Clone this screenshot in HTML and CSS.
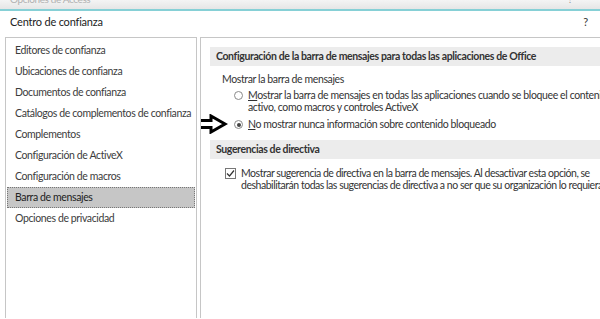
FILE: index.html
```html
<!DOCTYPE html>
<html lang="es">
<head>
    <meta charset="UTF-8">
    <title>Centro de confianza</title>
    <link rel="stylesheet" href="styles.css">
</head>
<body>
    <div class="backdrop">
        <span class="backdrop-title">Opciones de Access</span>
        <span class="backdrop-help">?</span>
    </div>
    <div class="dialog">
        <div class="dialog-header">
            <span>Centro de confianza</span>
            <span class="help">?</span>
        </div>
        <div class="dialog-body">
            <!-- Navegación -->
            <ul class="nav">
                <li>Editores de confianza</li>
                <li>Ubicaciones de confianza</li>
                <li>Documentos de confianza</li>
                <li>Catálogos de complementos de confianza</li>
                <li>Complementos</li>
                <li>Configuración de ActiveX</li>
                <li>Configuración de macros</li>
                <li class="selected">Barra de mensajes</li>
                <li>Opciones de privacidad</li>
            </ul>
            <!-- Contenido -->
            <div class="content">
                <div class="section-title">Configuración de la barra de mensajes para todas las aplicaciones de Office</div>
                <div class="group">
                    <div class="group-label">Mostrar la barra de mensajes</div>
                    <div class="option">
                        <span class="radio"></span>
                        <span class="option-text"><u>M</u>ostrar la barra de mensajes en todas las aplicaciones cuando se bloquee el contenido<br>activo, como macros y controles ActiveX</span>
                    </div>
                    <div class="option">
                        <svg class="arrow" width="40" height="20" viewBox="0 0 40 20">
                            <path d="M2 6.5 H23 V2 L37 10 L23 18 V13.5 H2 Z" fill="#fff" stroke="#000" stroke-width="3" stroke-linejoin="miter"/>
                        </svg>
                        <span class="radio checked"></span>
                        <span class="option-text"><u>N</u>o mostrar nunca información sobre contenido bloqueado</span>
                    </div>
                </div>
                <div class="section-title">Sugerencias de directiva</div>
                <div class="option check-option">
                    <span class="checkbox">
                        <svg width="9" height="9" viewBox="0 0 9 9"><path d="M1 4.5 L3.5 7 L8 1.5" fill="none" stroke="#333" stroke-width="1.2"/></svg>
                    </span>
                    <span class="option-text">Mostrar sugerencia de directiva en la barra de mensajes. Al desactivar esta opción, se<br>deshabilitarán todas las sugerencias de directiva a no ser que su organización lo requiera.</span>
                </div>
            </div>
        </div>
    </div>
</body>
</html>
```

FILE: styles.css
```css
body {
    margin: 0;
    width: 600px;
    height: 319px;
    overflow: hidden;
    background-color: #fff;
    font-family: Lato, "Noto Sans", sans-serif;
    font-size: 10.5px;
    letter-spacing: -0.38px;
    color: #333;
}
.backdrop {
    height: 9px;
    background: linear-gradient(#f4f4f4, #e6e6e6);
    border-bottom: 2px solid #86d0d6;
    position: relative;
    overflow: hidden;
}
.backdrop-title {
    position: absolute;
    left: 10px;
    top: -7px;
    color: #b0b0b0;
    font-size: 10px;
}
.backdrop-help {
    position: absolute;
    right: 28px;
    top: -7px;
    color: #999;
    font-size: 10px;
}
.dialog-header {
    display: flex;
    justify-content: space-between;
    padding: 3px 12px 0 10px;
    height: 23px;
    line-height: 16px;
    font-size: 11px;
    letter-spacing: -0.2px;
    color: #222;
}
.help {
    color: #333;
}
.dialog-body {
    display: flex;
    align-items: stretch;
    height: 281px;
}
.nav {
    list-style: none;
    margin: 0 0 0 5px;
    padding: 2px 0;
    width: 192px;
    border: 1px solid #c6c6c6;
    border-bottom: none;
    box-sizing: border-box;
}
.nav li {
    height: 21px;
    line-height: 21px;
    padding-left: 8px;
    margin: 0 1px;
    white-space: nowrap;
    color: #3c3c3c;
}
.nav li.selected {
    background-color: #c6c6c6;
    outline: 1px dotted #777;
    outline-offset: -1px;
    color: #222;
}
.content {
    flex: 1;
    margin-left: 3px;
    border-left: 1px solid #c6c6c6;
    border-top: 1px solid #c6c6c6;
    padding: 9px 0 0 9px;
    white-space: nowrap;
    overflow: hidden;
}
.section-title {
    background-color: #ececec;
    font-weight: bold;
    color: #333;
    height: 19px;
    line-height: 19px;
    padding-left: 6px;
}
.group {
    padding: 5px 0 5px 12px;
}
.group-label {
    line-height: 17px;
    margin-bottom: 1px;
}
.option {
    display: flex;
    align-items: flex-start;
    position: relative;
    padding-left: 12px;
    line-height: 12px;
    margin-bottom: 5px;
}
.option u {
    text-decoration: underline;
}
.radio {
    width: 9px;
    height: 9px;
    border: 1px solid #8a8a8a;
    border-radius: 50%;
    margin: 2px 5px 0 0;
    flex-shrink: 0;
    box-sizing: border-box;
    position: relative;
}
.radio.checked::after {
    content: "";
    position: absolute;
    left: 1.5px;
    top: 1.5px;
    width: 4px;
    height: 4px;
    border-radius: 50%;
    background-color: #444;
}
.arrow {
    position: absolute;
    left: -34px;
    top: -4px;
}
.check-option {
    padding: 8px 0 0 15px;
    letter-spacing: -0.47px;
}
.checkbox {
    width: 11px;
    height: 11px;
    border: 1px solid #777;
    box-sizing: border-box;
    margin: 1px 5px 0 0;
    flex-shrink: 0;
    display: flex;
    align-items: center;
    justify-content: center;
}
```
